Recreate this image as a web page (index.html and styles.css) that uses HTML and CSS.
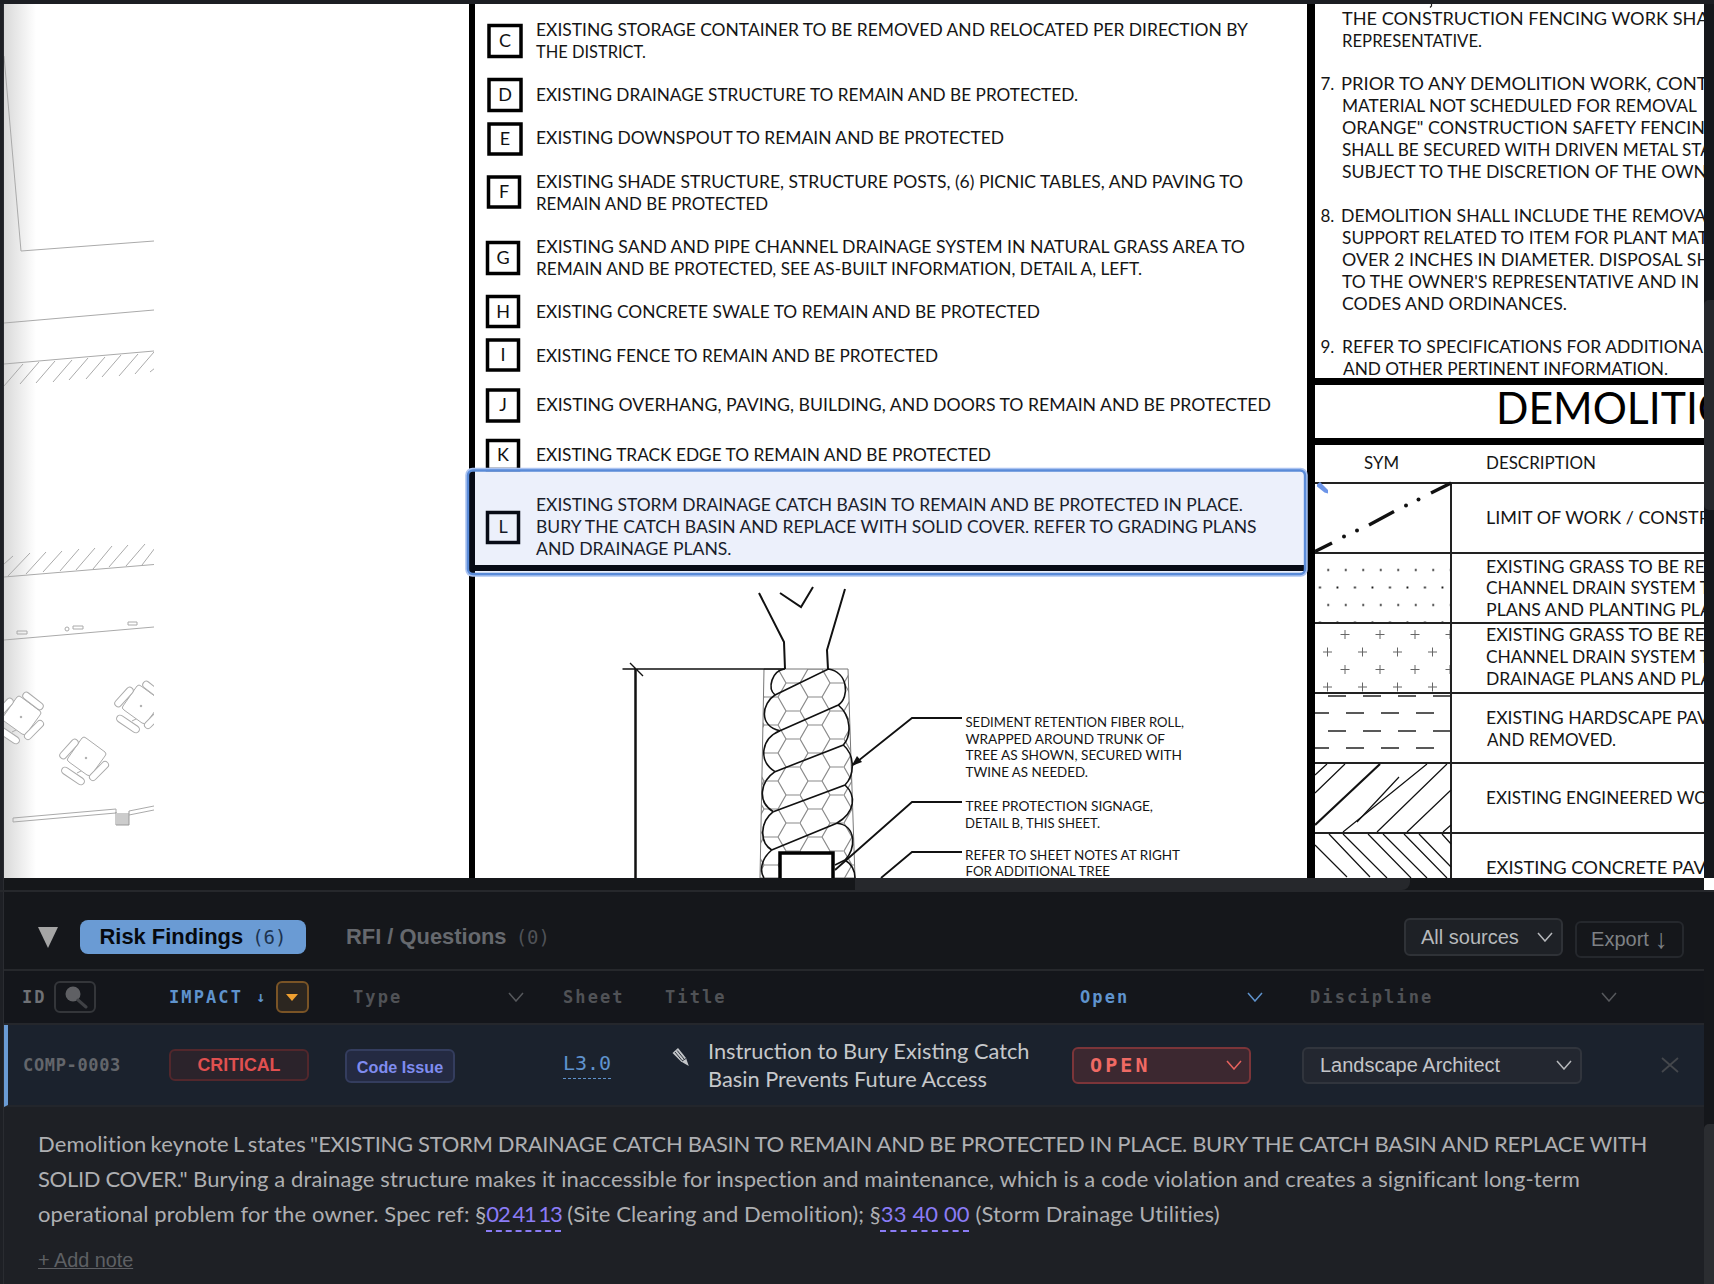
FILE: index.html
```html
<!DOCTYPE html>
<html lang="en">
<head>
<meta charset="utf-8">
<title>Risk Findings</title>
<link rel="stylesheet" href="styles.css">
</head>
<body>
<div class="app">
  <div class="topline"></div>
  <div class="viewer">
    <div class="rail"></div>
    <svg class="sheet" width="1700" height="874" viewBox="4 4 1700 874" xmlns="http://www.w3.org/2000/svg">
      <defs>
        <linearGradient id="fade" x1="0" x2="1" y1="0" y2="0">
          <stop offset="0" stop-color="#d9d9d9"/>
          <stop offset="1" stop-color="#ffffff"/>
        </linearGradient>
        <clipPath id="leftclip"><rect x="4" y="4" width="150" height="874"/></clipPath>
        <pattern id="dots" patternUnits="userSpaceOnUse" x="1319.5" y="561.5" width="17.5" height="35">
          <circle cx="8.75" cy="8.5" r="1.1" fill="#111"/>
          <circle cx="0.5" cy="26" r="1.1" fill="#111"/>
          <circle cx="18" cy="26" r="1.1" fill="#111"/>
        </pattern>
        <pattern id="plus" patternUnits="userSpaceOnUse" x="1320" y="630" width="35" height="35">
          <path d="M20.5 4.5h9M25 0v9M3 22h9M7.500 17.500v9" stroke="#666" stroke-width="1" fill="none"/>
        </pattern>
        <pattern id="dash" patternUnits="userSpaceOnUse" x="1311" y="696" width="35" height="35">
          <path d="M0 17h18M17 35h0M17 0h18M17 35h18" stroke="#222" stroke-width="1.400" fill="none"/>
        </pattern>
        <pattern id="hex" patternUnits="userSpaceOnUse" x="756" y="669" width="44" height="28">
          <path d="M0 14L8 0H22L30 14L22 28H8ZM30 14H44" stroke="#8a8a8a" stroke-width="1.200" fill="none"/>
        </pattern>
        <g id="bench" fill="#fff" stroke="#aaa" stroke-width="1">
          <rect x="-12" y="-3.500" width="24" height="7" rx="3.500"/>
        </g>
        <g id="table-top">
          <g fill="#fff" stroke="#aaa" stroke-width="1">
            <path d="M-8 -5L-14 -10M-3 12L-9 15M7 11L10 13" fill="none"/>
            <path d="M-4 -20Q-2 -22 0 -20L19 -6Q21 -4 19 -2L6 16Q4 19 1 17L-17 4Q-20 2 -18 0Z"/>
          </g>
          <circle cx="0" cy="0" r="0.800" fill="#999"/>
          <use href="#bench" transform="translate(-17 -9) rotate(-48)"/>
          <use href="#bench" transform="translate(-13 18) rotate(34) scale(1.090 1)"/>
          <use href="#bench" transform="translate(13 13) rotate(-45)"/>
        </g>
      </defs>

      <rect class="paper" x="4" y="4" width="1700" height="874"/>
      <rect x="4" y="4" width="32" height="874" fill="url(#fade)"/>

      <!-- left plan fragment -->
      <g class="plan" clip-path="url(#leftclip)">
        <path d="M4 56L21 251L154 241"/>
        <path d="M4 323L154 310"/>
        <path d="M4 364L154 351"/>
        <path d="M23 364L4 386M39 362L20 384M55 361L36 383M72 360L53 382M88 358L69 380M105 357L86 379M121 355L102 377M138 354L119 376M154 352L135 374M160 364L150 372"/>
        <path d="M4 577L154 564.500"/>
        <path d="M13 556L4 564M30 553L8 576M46 552L26 574M62 551L43 572M79 549L60 571M95 548L76 570M112 546L93 569M128 545L109 567M145 544L126 566M158 544L142 565"/>
        <path d="M4 640L154 627"/>
        <path d="M17 631h10v3h-10zM73 626h10v3h-10zM128 622h9v3h-9z"/>
        <circle cx="67" cy="629" r="2"/>
        <use href="#table-top" x="21" y="717"/>
        <use href="#bench" transform="translate(33 701) rotate(38)"/>
        <use href="#table-top" x="86" y="758"/>
        <use href="#table-top" x="141" y="706"/>
        <use href="#bench" transform="translate(153 690) rotate(38)"/>
        <path d="M13 818L116 809V813L13 822ZM129 811L154 806M129 815L154 810"/>
        <path d="M116 812V825H129V811M118 813V825M120 813V825M122 813V825M124 813V825M126 813V825M128 813V825" stroke="#999"/>
      </g>

      <!-- center column -->
      <rect class="ink" x="469" y="4" width="6" height="874"/>
      <rect class="ink" x="1307" y="4" width="8" height="874"/>

      <g class="keybox">
        <rect x="489" y="25.500" width="32" height="31"/>
        <rect x="489" y="79.500" width="32" height="31"/>
        <rect x="489" y="124" width="32" height="30"/>
        <rect x="488.500" y="177" width="31" height="30"/>
        <rect x="487.500" y="242.500" width="31" height="31"/>
        <rect x="487.500" y="296.500" width="31" height="30"/>
        <rect x="487.500" y="340" width="31" height="30"/>
        <rect x="487.500" y="390" width="31" height="31"/>
        <rect x="487.500" y="440.500" width="31" height="29"/>
        <rect x="487.500" y="512.500" width="31" height="30"/>
      </g>
      <g class="keyletter">
        <text x="505" y="47">C</text>
        <text x="505" y="101">D</text>
        <text x="505" y="145">E</text>
        <text x="504" y="198">F</text>
        <text x="503" y="264">G</text>
        <text x="503" y="318">H</text>
        <text x="503" y="361">I</text>
        <text x="503" y="411">J</text>
        <text x="503" y="461">K</text>
        <text x="503" y="533">L</text>
      </g>
      <g class="note">
        <text x="536" y="35.500" textLength="712" lengthAdjust="spacingAndGlyphs">EXISTING STORAGE CONTAINER TO BE REMOVED AND RELOCATED PER DIRECTION BY</text>
        <text x="536" y="57.500" textLength="110" lengthAdjust="spacingAndGlyphs">THE DISTRICT.</text>
        <text x="536" y="100.500" textLength="542" lengthAdjust="spacingAndGlyphs">EXISTING DRAINAGE STRUCTURE TO REMAIN AND BE PROTECTED.</text>
        <text x="536" y="144" textLength="468" lengthAdjust="spacingAndGlyphs">EXISTING DOWNSPOUT TO REMAIN AND BE PROTECTED</text>
        <text x="536" y="187.500" textLength="707" lengthAdjust="spacingAndGlyphs">EXISTING SHADE STRUCTURE, STRUCTURE POSTS, (6) PICNIC TABLES, AND PAVING TO</text>
        <text x="536" y="210" textLength="232" lengthAdjust="spacingAndGlyphs">REMAIN AND BE PROTECTED</text>
        <text x="536" y="253" textLength="709" lengthAdjust="spacingAndGlyphs">EXISTING SAND AND PIPE CHANNEL DRAINAGE SYSTEM IN NATURAL GRASS AREA TO</text>
        <text x="536" y="275" textLength="606" lengthAdjust="spacingAndGlyphs">REMAIN AND BE PROTECTED, SEE AS-BUILT INFORMATION, DETAIL A, LEFT.</text>
        <text x="536" y="318" textLength="504" lengthAdjust="spacingAndGlyphs">EXISTING CONCRETE SWALE TO REMAIN AND BE PROTECTED</text>
        <text x="536" y="361.500" textLength="402" lengthAdjust="spacingAndGlyphs">EXISTING FENCE TO REMAIN AND BE PROTECTED</text>
        <text x="536" y="411" textLength="735" lengthAdjust="spacingAndGlyphs">EXISTING OVERHANG, PAVING, BUILDING, AND DOORS TO REMAIN AND BE PROTECTED</text>
        <text x="536" y="461" textLength="455" lengthAdjust="spacingAndGlyphs">EXISTING TRACK EDGE TO REMAIN AND BE PROTECTED</text>
        <text x="536" y="511" textLength="707" lengthAdjust="spacingAndGlyphs">EXISTING STORM DRAINAGE CATCH BASIN TO REMAIN AND BE PROTECTED IN PLACE.</text>
        <text x="536" y="533" textLength="720.500" lengthAdjust="spacingAndGlyphs">BURY THE CATCH BASIN AND REPLACE WITH SOLID COVER. REFER TO GRADING PLANS</text>
        <text x="536" y="555" textLength="195.500" lengthAdjust="spacingAndGlyphs">AND DRAINAGE PLANS.</text>
      </g>
      <rect class="ink" x="469" y="565" width="838" height="6"/>

      <!-- detail drawing -->
      <polygon points="764,669 848,669 855,878 760,878" fill="url(#hex)" stroke="#777" stroke-width="1"/>
      <g class="heavy">
        <path d="M759 593L784 642L785 669"/>
        <path d="M845 589L827 650L828 669"/>
        <path d="M780 593L801 607L813 587"/>
      </g>
      <path class="thin" d="M622.500 669H785M630 663L643 676"/>
      <path class="heavy heavy-dim" d="M635.500 669V878"/>
      <g class="coil">
        <path d="M784.300 669C772 671 767 688 775 695L828.300 669C848 672 850 697 838.300 705L780 730.700"/>
        <path d="M775 695C762 703 758 726 780 730.700"/>
        <path d="M838.300 705C851 716 852 735 843.300 745L775 771.700"/>
        <path d="M780 730.700C762 738 757 760 775 771.700"/>
        <path d="M843.300 745C855 755 855 775 845 785L773.300 811.700"/>
        <path d="M775 771.700C760 782 757 802 773.300 811.700"/>
        <path d="M845 785C856 795 856 812 836.700 823.300L771.700 850"/>
        <path d="M773.300 811.700C760 822 759 842 771.700 850"/>
        <path d="M836.700 823.300C857 825 856 850 845 860L835 865"/>
        <path d="M771.700 850C760 860 760 872 764 878"/>
        <path d="M845 860C853 865 855 872 855 878"/>
      </g>
      <rect x="780" y="853" width="53" height="40" fill="#fff" stroke="#000" stroke-width="3.500"/>
      <g class="leader">
        <path d="M962 718H912L853 765"/>
        <path d="M962 802H912L835 870"/>
        <path d="M962 852H912L881 878"/>
      </g>
      <polygon points="851.500,766 857,756 862,762" fill="#111"/>
      <g class="small">
        <text x="965.500" y="727" textLength="218.500" lengthAdjust="spacingAndGlyphs">SEDIMENT RETENTION FIBER ROLL,</text>
        <text x="965.500" y="743.500" textLength="199.500" lengthAdjust="spacingAndGlyphs">WRAPPED AROUND TRUNK OF</text>
        <text x="965.500" y="760" textLength="216.500" lengthAdjust="spacingAndGlyphs">TREE AS SHOWN, SECURED WITH</text>
        <text x="965.500" y="777" textLength="122.500" lengthAdjust="spacingAndGlyphs">TWINE AS NEEDED.</text>
        <text x="965.500" y="811" textLength="187.500" lengthAdjust="spacingAndGlyphs">TREE PROTECTION SIGNAGE,</text>
        <text x="965" y="827.500" textLength="135" lengthAdjust="spacingAndGlyphs">DETAIL B, THIS SHEET.</text>
        <text x="965" y="859.500" textLength="215" lengthAdjust="spacingAndGlyphs">REFER TO SHEET NOTES AT RIGHT</text>
        <text x="965.500" y="876" textLength="144.500" lengthAdjust="spacingAndGlyphs">FOR ADDITIONAL TREE</text>
      </g>

      <!-- right column -->
      <path d="M1431.500 4V6L1430 7.500" fill="none" stroke="#222" stroke-width="1.200"/>
      <g class="note wide">
        <text x="1342" y="25" textLength="376" lengthAdjust="spacingAndGlyphs">THE CONSTRUCTION FENCING WORK SHAL</text>
        <text x="1342" y="47" textLength="140" lengthAdjust="spacingAndGlyphs">REPRESENTATIVE.</text>
        <text x="1320.500" y="90">7.</text>
        <text x="1341" y="90" textLength="378" lengthAdjust="spacingAndGlyphs">PRIOR TO ANY DEMOLITION WORK, CONTR</text>
        <text x="1342" y="112" textLength="355" lengthAdjust="spacingAndGlyphs">MATERIAL NOT SCHEDULED FOR REMOVAL</text>
        <text x="1342" y="134" textLength="376" lengthAdjust="spacingAndGlyphs">ORANGE" CONSTRUCTION SAFETY FENCING</text>
        <text x="1342" y="156" textLength="370" lengthAdjust="spacingAndGlyphs">SHALL BE SECURED WITH DRIVEN METAL STA</text>
        <text x="1342" y="178" textLength="365" lengthAdjust="spacingAndGlyphs">SUBJECT TO THE DISCRETION OF THE OWN</text>
        <text x="1320.500" y="222">8.</text>
        <text x="1341" y="222" textLength="365" lengthAdjust="spacingAndGlyphs">DEMOLITION SHALL INCLUDE THE  REMOVA</text>
        <text x="1342" y="244" textLength="366" lengthAdjust="spacingAndGlyphs">SUPPORT RELATED TO ITEM FOR PLANT MAT</text>
        <text x="1342" y="266" textLength="368" lengthAdjust="spacingAndGlyphs">OVER 2 INCHES IN DIAMETER.  DISPOSAL SH</text>
        <text x="1342" y="288" textLength="357" lengthAdjust="spacingAndGlyphs">TO THE OWNER'S REPRESENTATIVE AND IN</text>
        <text x="1342" y="310" textLength="225" lengthAdjust="spacingAndGlyphs">CODES AND ORDINANCES.</text>
        <text x="1320.500" y="353">9.</text>
        <text x="1342" y="353" textLength="370" lengthAdjust="spacingAndGlyphs">REFER TO SPECIFICATIONS FOR ADDITIONAL</text>
        <text x="1343" y="375" textLength="325" lengthAdjust="spacingAndGlyphs">AND OTHER PERTINENT INFORMATION.</text>
      </g>
      <rect class="ink" x="1315" y="378" width="389" height="7"/>
      <text class="title" x="1496" y="424" textLength="236" lengthAdjust="spacingAndGlyphs">DEMOLITIO</text>
      <rect class="ink" x="1315" y="438" width="389" height="7"/>
      <g class="note wide">
        <text x="1364" y="469" textLength="35" lengthAdjust="spacingAndGlyphs">SYM</text>
        <text x="1486" y="469" textLength="110" lengthAdjust="spacingAndGlyphs">DESCRIPTION</text>
      </g>
      <rect x="1315" y="553" width="136" height="70" fill="url(#dots)"/>
      <rect x="1315" y="623" width="136" height="70" fill="url(#plus)"/>
      <rect x="1315" y="693" width="136" height="70" fill="url(#dash)"/>
      <path class="rule" d="M1315 483H1704M1315 553H1704M1315 623H1704M1315 693H1704M1315 763H1704M1315 833H1704M1451 483V878"/>
      <path class="dashdot" d="M1315 551.500L1332 543M1369 525L1394 511.500M1431 493L1451 483"/>
      <g fill="#111">
        <circle cx="1344" cy="536.500" r="2"/><circle cx="1357" cy="530.500" r="2"/>
        <circle cx="1406" cy="505.500" r="2"/><circle cx="1418.500" cy="499.500" r="2"/>
      </g>
      <g class="hatch">
        <path d="M1315 775L1327 764M1315 793L1345 764M1357 822L1399 777"/>
        <path d="M1343 832L1427 764M1377 832L1447 764M1407 832L1451 790M1443 832L1451 825"/>
        <path class="hatch-heavy" d="M1315 825L1380 764"/>
      </g>
      <g class="hatch">
        <path d="M1315 845L1347 877M1329 834L1370 877M1343 834L1387 878M1368 834L1411 878M1383 834L1427 878M1404 834L1447 878M1419 834L1451 867M1442 834L1451 844"/>
      </g>
      <g class="note wide">
        <text x="1486" y="523.500" textLength="224" lengthAdjust="spacingAndGlyphs">LIMIT OF WORK / CONSTR</text>
        <text x="1486" y="572.500" textLength="219" lengthAdjust="spacingAndGlyphs">EXISTING GRASS TO BE RE</text>
        <text x="1486" y="594" textLength="224" lengthAdjust="spacingAndGlyphs">CHANNEL DRAIN SYSTEM T</text>
        <text x="1486" y="616" textLength="226" lengthAdjust="spacingAndGlyphs">PLANS AND PLANTING PLA</text>
        <text x="1486" y="641" textLength="219" lengthAdjust="spacingAndGlyphs">EXISTING GRASS TO BE RE</text>
        <text x="1486" y="663" textLength="224" lengthAdjust="spacingAndGlyphs">CHANNEL DRAIN SYSTEM T</text>
        <text x="1486" y="684.500" textLength="226" lengthAdjust="spacingAndGlyphs">DRAINAGE PLANS AND PLA</text>
        <text x="1486" y="723.500" textLength="223" lengthAdjust="spacingAndGlyphs">EXISTING HARDSCAPE PAV</text>
        <text x="1487" y="745.500" textLength="129" lengthAdjust="spacingAndGlyphs">AND REMOVED.</text>
        <text x="1486" y="803.500" textLength="222" lengthAdjust="spacingAndGlyphs">EXISTING ENGINEERED WO</text>
        <text x="1486" y="874" textLength="225" lengthAdjust="spacingAndGlyphs">EXISTING CONCRETE PAVI</text>
      </g>
      <polygon points="1317,484.500 1320,482 1328,490 1328,493.500 1324.500,492.500 1317,486.500" fill="#6d95e8"/>

      <!-- selected keynote highlight -->
      <rect class="halo" x="466.500" y="469" width="840" height="106.500" rx="6"/>
      <rect class="pick" x="468" y="470.500" width="837" height="103.500" rx="5"/>
    </svg>
    <div class="vscroll vscroll-top"><div class="vthumb"></div></div>
  </div>

  <div class="hstrip">
    <div class="rail"></div>
    <div class="htrack"><div class="hthumb"></div></div>
    <div class="corner"></div>
  </div>

  <div class="panel">
    <div class="rail"></div>
    <main class="main">
      <div class="toolbar">
        <span class="collapse"></span>
        <button class="tab tab-on">Risk Findings <span class="count">(6)</span></button>
        <button class="tab tab-off">RFI / Questions <span class="count">(0)</span></button>
        <div class="select select-sources">All sources
          <svg class="chev chev-light" viewBox="0 0 16 10"><path d="M1 1L8 9L15 1"/></svg>
        </div>
        <button class="export">Export <span class="arrow">↓</span></button>
      </div>

      <div class="table-grid head">
        <div class="hcell hcell-id">
          <span class="th">ID</span>
          <button class="iconbtn">
            <svg width="30" height="24" viewBox="0 0 30 24">
              <circle cx="13" cy="9" r="7.500" fill="#5f6064"/>
              <path d="M18 15L26 22" stroke="#3f4145" stroke-width="3" stroke-linecap="round"/>
            </svg>
          </button>
        </div>
        <div class="hcell hcell-impact">
          <span class="th th-active">IMPACT</span>
          <span class="sort">↓</span>
          <button class="orangebtn"><span class="caret"></span></button>
        </div>
        <div class="hcell filter filter-type">
          <span class="th th-dim">Type</span>
          <svg class="chev" viewBox="0 0 16 10"><path d="M1 1L8 9L15 1"/></svg>
        </div>
        <div class="hcell"><span class="th th-dim">Sheet</span></div>
        <div class="hcell"><span class="th th-dim">Title</span></div>
        <div class="hcell filter filter-open">
          <span class="th th-active">Open</span>
          <svg class="chev chev-blue" viewBox="0 0 16 10"><path d="M1 1L8 9L15 1"/></svg>
        </div>
        <div class="hcell filter filter-disc">
          <span class="th th-dim">Discipline</span>
          <svg class="chev" viewBox="0 0 16 10"><path d="M1 1L8 9L15 1"/></svg>
        </div>
        <div></div>
      </div>

      <div class="table-grid row">
        <div class="comp">COMP-0003</div>
        <div><span class="badge badge-crit">CRITICAL</span></div>
        <div class="typecell"><span class="badge badge-type">Code Issue</span></div>
        <div><span class="sheetref">L3.0</span></div>
        <div class="titlecell">
          <svg class="pencil" viewBox="0 0 18 20">
            <path class="pencil-body" d="M0.500 6L6 1L14 11L16.800 19L9 14.500Z"/>
            <path class="pencil-line" d="M3 5L10 13.500M5.200 3.500L12 12M10 14L14 11.500"/>
          </svg>
          <span class="titletext">Instruction to Bury Existing Catch<br>Basin Prevents Future Access</span>
        </div>
        <div>
          <div class="select select-open">OPEN
            <svg class="chev chev-red" viewBox="0 0 16 10"><path d="M1 1L8 9L15 1"/></svg>
          </div>
        </div>
        <div>
          <div class="select select-disc">Landscape Architect
            <svg class="chev chev-light" viewBox="0 0 16 10"><path d="M1 1L8 9L15 1"/></svg>
          </div>
        </div>
        <div>
          <svg class="close" viewBox="0 0 18 16"><path d="M1 1L17 15M17 1L1 15"/></svg>
        </div>
      </div>

      <div class="detail">
        <p class="desc"><span class="lead">Demolition keynote L states "</span><span class="caps">EXISTING STORM DRAINAGE CATCH BASIN TO REMAIN AND BE PROTECTED IN PLACE. BURY THE CATCH BASIN AND REPLACE WITH</span><br><span class="caps">SOLID COVER."</span> Burying a drainage structure makes it inaccessible for inspection and maintenance, which is a code violation and creates a significant long-term<br>operational problem for the owner. Spec ref: §<a class="spec spec-tight">02 41 13</a> (Site Clearing and Demolition); §<a class="spec">33 40 00</a> (Storm Drainage Utilities)</p>
        <a class="addnote">+ Add note</a>
      </div>
    </main>
    <div class="vscroll vscroll-bottom"><div class="vthumb vthumb-bottom"></div></div>
  </div>
</div>
</body>
</html>
```
FILE: styles.css
```css
* { box-sizing: border-box; }
html, body { margin: 0; padding: 0; background: #15171b; }
body { width: 1714px; height: 1284px; overflow: hidden; font-family: "Liberation Sans", Arial, sans-serif; }
button { font: inherit; background: none; padding: 0; margin: 0; border: 0; color: inherit; }

.app { display: flex; flex-direction: column; width: 1714px; height: 1284px; }
.topline { height: 4px; background: #1c1e23; flex: none; }
.rail { width: 4px; flex: none; background: #1e2025; border-right: 1px solid #2a2c31; }

/* drawing viewer */
.viewer { display: flex; height: 874px; flex: none; }
.sheet { display: block; flex: none; }
.vscroll { width: 10px; flex: none; background: #15171b; }
.vscroll-top { padding-top: 296px; }
.vthumb { height: 210px; background: #25272b; border-radius: 5px 0 0 5px; }
.vscroll-bottom { padding-top: 232px; }
.vthumb-bottom { height: 170px; background: #2b2d31; }

.paper { fill: #fff; }
.ink { fill: #000; }
.plan { fill: none; stroke: #aaa; stroke-width: 1; }
.keybox { fill: none; stroke: #000; stroke-width: 3.5; }
.keyletter { font-family: Lato, "Liberation Sans", sans-serif; font-size: 18px; fill: #111; text-anchor: middle; }
.note { font-family: Lato, "Liberation Sans", sans-serif; font-size: 17.5px; fill: #151515; }
.wide { font-size: 17px; }
.small { font-family: Lato, "Liberation Sans", sans-serif; font-size: 14px; fill: #151515; }
.title { font-family: Lato, "Liberation Sans", sans-serif; font-size: 44px; fill: #000; }
.heavy { fill: none; stroke: #111; stroke-width: 2; }
.heavy-dim { stroke-width: 2.5; }
.thin { fill: none; stroke: #111; stroke-width: 1.4; }
.coil { fill: none; stroke: #111; stroke-width: 1.6; }
.leader { fill: none; stroke: #111; stroke-width: 1.8; }
.rule { fill: none; stroke: #222; stroke-width: 2; }
.dashdot { fill: none; stroke: #111; stroke-width: 3.4; }
.hatch { fill: none; stroke: #111; stroke-width: 1.2; }
.hatch-heavy { stroke-width: 2.2; }
.halo { fill: none; stroke: #abc3f1; stroke-width: 2.5; }
.pick { fill: rgba(70, 110, 220, 0.1); stroke: #5a8bd8; stroke-width: 2.4; }

/* scroller strip */
.hstrip { display: flex; height: 12px; flex: none; background: #15171a; }
.htrack { width: 1700px; flex: none; padding-left: 851px; }
.hthumb { width: 555px; height: 12px; background: #26282c; border-radius: 0 0 8px 0; }
.corner { flex: 1; background: #fff; }

/* panel */
.panel { display: flex; flex: 1; min-height: 0; border-top: 2px solid #26282c; }
.main { width: 1700px; flex: none; display: flex; flex-direction: column; background: #1e2025; }

.toolbar { display: flex; align-items: center; height: 79px; padding: 26px 20px 13px 34px; background: #15171b; border-bottom: 2px solid #26282c; flex: none; }
.collapse { width: 0; height: 0; border-left: 10px solid transparent; border-right: 10px solid transparent; border-top: 21px solid #a5a5a5; margin-right: 22px; }
.tab { height: 34px; font-weight: 700; font-size: 21.9px; white-space: nowrap; border-radius: 8px; }
.tab-on { width: 226px; background: #6a9bd4; color: #06090e; }
.tab-off { margin-left: 40px; color: #66696e; }
.count { font-family: "DejaVu Sans Mono", monospace; font-weight: 400; font-size: 19px; margin-left: 3px; }
.tab-on .count { color: #1c3350; }
.tab-off .count { color: #4f5257; }

.select { display: flex; align-items: center; justify-content: space-between; height: 38px; border-radius: 6px; border: 2px solid #2f3237; background: #1e2126; color: #b7b9bc; font-size: 20px; padding: 0 8px 0 15px; white-space: nowrap; }
.select-sources { margin-left: auto; width: 159px; }
.export { width: 109px; height: 37px; margin-left: 12px; margin-top: 5px; border: 2px solid #25282d; border-radius: 6px; color: #7e8185; font-size: 20px; white-space: nowrap; }
.arrow { font-size: 27px; line-height: 0; vertical-align: -2px; }

.chev { width: 16px; height: 10px; flex: none; fill: none; stroke: #57595d; stroke-width: 1.5; }
.chev-light { stroke: #b7b9bc; }
.chev-blue { stroke: #5f93cd; }
.chev-red { stroke: #e8625e; }

.table-grid { display: grid; grid-template-columns: 146px 176px 218px 102px 407px 231px 357px 1fr; padding-left: 19px; align-items: center; flex: none; }
.head { height: 54px; background: #14161b; border-bottom: 2px solid #25272c; }
.hcell { display: flex; align-items: center; }
.hcell-id { gap: 7px; margin-left: -1px; }
.th { font-family: "DejaVu Sans Mono", monospace; font-weight: 700; font-size: 17px; letter-spacing: 2.1px; color: #6f7175; }
.th-active { color: #5f93cd; }
.th-dim { color: #505256; }
.iconbtn { width: 42px; height: 32px; border: 2px solid #34363a; border-radius: 6px; display: flex; align-items: center; justify-content: center; }
.sort { color: #5f93cd; font-family: "DejaVu Sans Mono", monospace; font-size: 15px; font-weight: 700; margin-left: 13px; }
.orangebtn { width: 33px; height: 32px; margin-left: 10.5px; border: 2px solid #7a5426; border-radius: 6px; background: #2c2620; display: flex; align-items: center; justify-content: center; }
.caret { width: 0; height: 0; border-left: 6px solid transparent; border-right: 6px solid transparent; border-top: 7px solid #f0a030; }
.filter { justify-content: space-between; }
.filter-type { width: 179px; padding-left: 8px; }
.filter-open { width: 191px; padding-left: 8px; }
.filter-disc { width: 314px; padding-left: 7px; }

.row { height: 82px; background: #1b222d; border-left: 4px solid #6a9bd4; padding-left: 15px; border-bottom: 2px solid #23262c; }
.comp { font-family: "DejaVu Sans Mono", monospace; font-weight: 700; font-size: 17px; letter-spacing: .65px; color: #63666b; }
.badge { display: inline-flex; align-items: center; justify-content: center; border-radius: 6px; border: 2px solid; font-weight: 700; }
.badge-crit { width: 140px; height: 32px; font-size: 17.8px; color: #e05050; background: #2b232b; border-color: #52272c; }
.typecell { margin-top: 2px; }
.badge-type { width: 110px; height: 34px; padding-top: 2px; font-size: 16.2px; color: #7f8cf0; background: #242a42; border-color: #343d5e; }
.sheetref { font-family: "DejaVu Sans Mono", monospace; font-size: 20px; letter-spacing: 0; color: #5f93cd; display: inline-block; padding-bottom: 3px; border-bottom: 1.5px dashed #5f93cd; }
.titlecell { display: flex; align-items: center; padding-left: 7px; }
.pencil { width: 18px; height: 20px; flex: none; margin: -16px 18px 0 0; }
.pencil-body { fill: #c3c5c8; }
.pencil-line { fill: none; stroke: #1b222d; stroke-width: .9; }
.titletext { font-family: Lato, sans-serif; font-size: 21.8px; line-height: 28px; color: #c6c8cb; white-space: nowrap; }
.select-open { width: 179px; height: 37px; background: #3c2830; border-color: #7c3539; color: #f06a64; font-family: "DejaVu Sans Mono", monospace; font-weight: 700; font-size: 20px; letter-spacing: 3.1px; padding: 0 7px 0 16px; }
.select-disc { width: 280px; height: 37px; background: #232730; border-color: #31353d; color: #c3c5c9; margin-left: -1px; padding-left: 16px; }
.close { display: block; width: 18px; height: 16px; fill: none; stroke: #44474c; stroke-width: 1.8; margin-left: 1px; }

.detail { padding: 19px 0 0 34px; flex: 1; }
.desc { margin: 0; font-family: Lato, sans-serif; font-size: 22px; line-height: 35px; letter-spacing: .13px; color: #aeafb2; white-space: nowrap; }
.lead { word-spacing: -1.6px; }
.caps { letter-spacing: -.32px; }
.spec { color: #8b7cf6; text-decoration: underline dashed 1.5px; text-underline-offset: 8px; }
.spec-tight { letter-spacing: -1.2px; word-spacing: -1.5px; }
.addnote { display: inline-block; margin-top: 18px; font-size: 19.8px; color: #5e6064; text-decoration: underline; }
```
